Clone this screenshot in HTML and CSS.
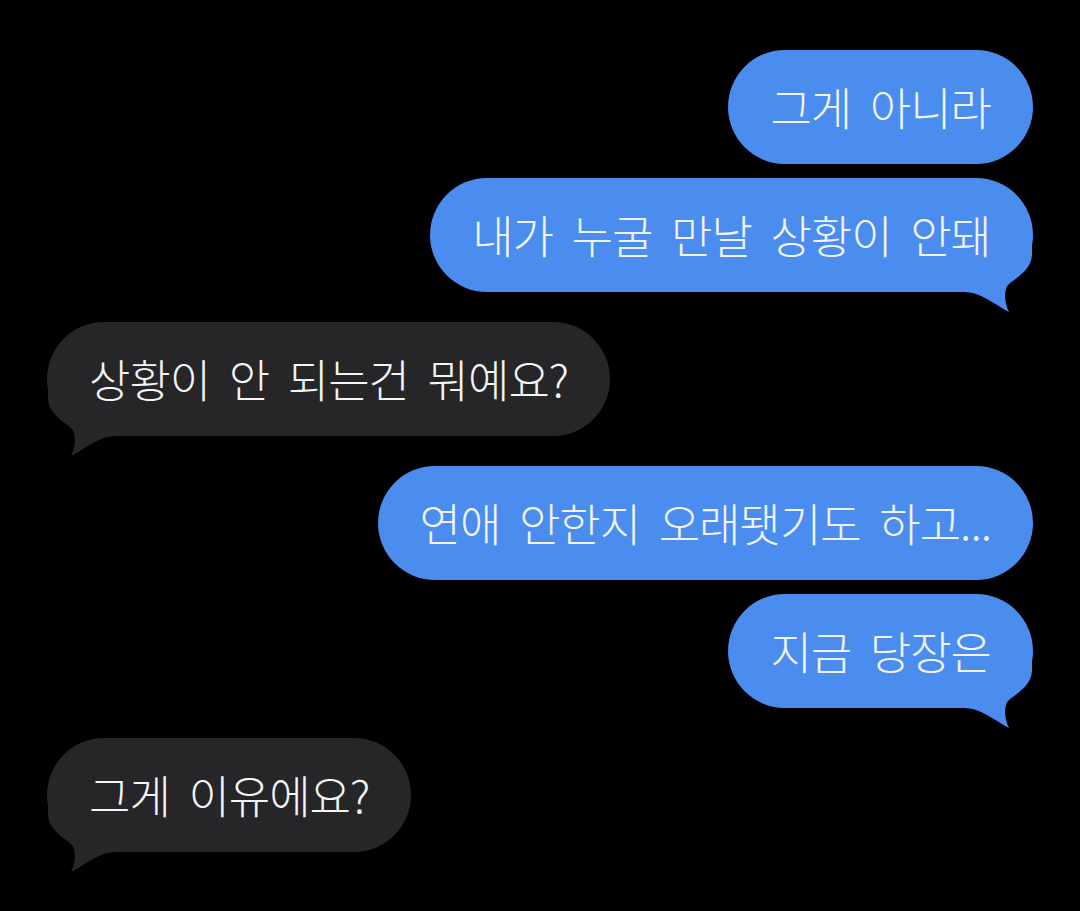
FILE: index.html
```html
<!DOCTYPE html>
<html lang="ko">
<head>
<meta charset="utf-8">
<title>Messages</title>
<link rel="stylesheet" href="styles.css">
</head>
<body>
<main class="chat">
  <div class="row me">
    <div class="bubble blue">그게 아니라</div>
  </div>
  <div class="row me tight">
    <div class="bubble blue">내가 누굴 만날 상황이 안돼<svg class="tail" viewBox="0 0 70 70" width="70" height="70"><path d="M0,0 L67,0 L67,10 C66,26 50,33 43,40 C39,45 39,57 44,67 C34,62 22,52 8,48 L0,47 Z"/></svg></div>
  </div>
  <div class="row them">
    <div class="bubble gray">상황이 안 되는건 뭐예요?<svg class="tail" viewBox="0 0 70 70" width="70" height="70"><path d="M0,0 L67,0 L67,10 C66,26 50,33 43,40 C39,45 39,57 44,67 C34,62 22,52 8,48 L0,47 Z"/></svg></div>
  </div>
  <div class="row me">
    <div class="bubble blue">연애 안한지 오래됏기도 하고...</div>
  </div>
  <div class="row me tight">
    <div class="bubble blue">지금 당장은<svg class="tail" viewBox="0 0 70 70" width="70" height="70"><path d="M0,0 L67,0 L67,10 C66,26 50,33 43,40 C39,45 39,57 44,67 C34,62 22,52 8,48 L0,47 Z"/></svg></div>
  </div>
  <div class="row them">
    <div class="bubble gray">그게 이유에요?<svg class="tail" viewBox="0 0 70 70" width="70" height="70"><path d="M0,0 L67,0 L67,10 C66,26 50,33 43,40 C39,45 39,57 44,67 C34,62 22,52 8,48 L0,47 Z"/></svg></div>
  </div>
</main>
</body>
</html>
```
FILE: styles.css
```css
html, body {
  margin: 0;
  padding: 0;
  background: #000;
}
body {
  width: 1080px;
  height: 911px;
  overflow: hidden;
  font-family: "Noto Sans CJK KR", "Noto Sans", sans-serif;
}
.chat {
  display: flex;
  flex-direction: column;
  padding: 50px 47px 0 47px;
}
.row {
  display: flex;
  margin-top: 30px;
}
.row:first-child {
  margin-top: 0;
}
.row.tight {
  margin-top: 14px;
}
.row.me {
  justify-content: flex-end;
}
.row.them {
  justify-content: flex-start;
}
.bubble {
  position: relative;
  z-index: 0;
  padding: 30px 42px;
  border-radius: 57px;
  font-size: 45px;
  font-weight: 300;
  line-height: 54px;
  letter-spacing: -1px;
  word-spacing: 7px;
  color: #f2f4f8;
  white-space: nowrap;
}
.bubble.blue {
  background: #4b8def;
}
.bubble.gray {
  background: #262628;
}
.tail {
  position: absolute;
  z-index: -1;
  bottom: -23px;
  display: block;
}
.blue .tail {
  right: -2px;
  fill: #4b8def;
}
.gray .tail {
  left: -2px;
  fill: #262628;
  transform: scaleX(-1);
}
```
